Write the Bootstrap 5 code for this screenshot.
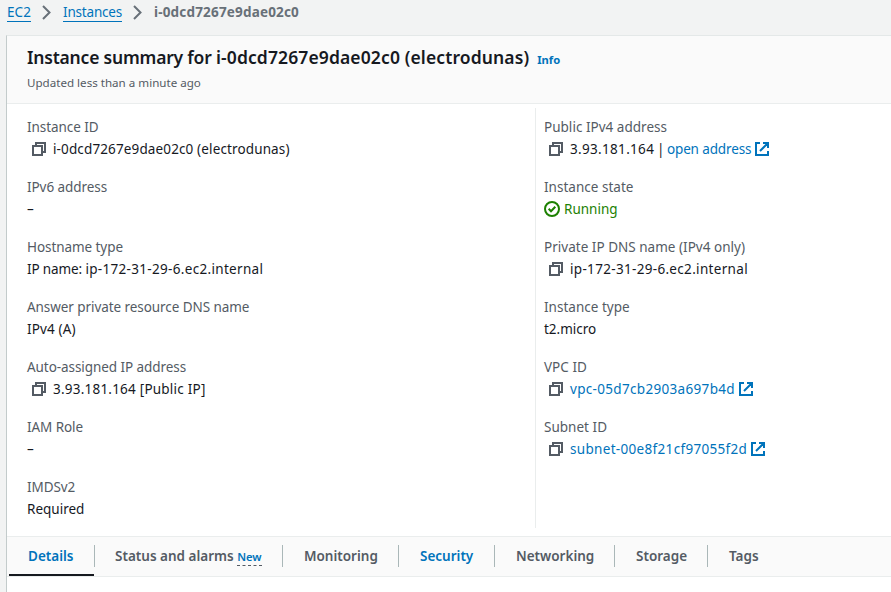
<!DOCTYPE html>
<html lang="en">
<head>
<meta charset="utf-8">
<meta name="viewport" content="width=device-width, initial-scale=1">
<title>Instance summary</title>
<link href="https://cdn.jsdelivr.net/npm/bootstrap@5.3.0/dist/css/bootstrap.min.css" rel="stylesheet">
<style>
body{font-family:"Noto Sans",sans-serif;font-size:13.5px;line-height:22px;color:#16191f;background:#f2f3f3;height:592px;overflow:hidden}
a{color:#0073bb;text-decoration:none}
svg{display:block;flex:none}
.crumbs{height:35px;padding-left:7px}
.crumbs a{border-bottom:1px solid #0073bb;line-height:18px}
.crumbs span{color:#687078;font-weight:700;letter-spacing:.18px;line-height:18px;padding-bottom:1px}
.crumbs .c1{letter-spacing:.1px}
.crumbs .c2{letter-spacing:-.2px}
.crumb-row{height:24px}
.chev{margin:0 12px 0 11px}
.panel{margin-left:6px;height:557px;background:#fff;border-left:1px solid #c3cbcb;border-top:1px solid #e4e8e8}
.panel-head{height:68px;padding:10px 20px 0;background:#fafafa;border-bottom:1px solid #eaeded}
.panel-head h1{font-size:17.5px;line-height:22px;font-weight:600;letter-spacing:.12px}
.panel-head h1 span{letter-spacing:-.2px}
.info{font-size:11.2px;font-weight:700;line-height:22px;margin-left:8px;padding-top:3px}
.updated{font-size:11.6px;line-height:18px;color:#545b64;margin-top:3px}
.details{padding:4px 0 8px}
.left-col{width:528px;padding:8px 20px}
.right-col{padding:8px;border-left:1px solid #eaeded;height:420px}
dl{gap:16px}
dt{font-weight:400;color:#545b64;height:22px}
.left-col dt{letter-spacing:-.07px}
.right-col dt{letter-spacing:.02px}
dd{height:22px;margin:0}
.s1{letter-spacing:.13px}
.s2{letter-spacing:.22px}
.s3{letter-spacing:.32px}
.tight{letter-spacing:-.13px}
.bar{margin:0 -.7px}
.copy{margin:0 7px 0 5px}
.ext{margin-left:4px}
.ok{color:#1d8102}
.tabs{height:41px;padding-left:2px;background:#fafafa;border-top:1px solid #eaeded;border-bottom:1px solid #eaeded;flex-wrap:nowrap}
.tabs .nav-link{position:relative;height:40px;padding:0 0 0 21px;font-weight:600;color:#545b64;line-height:38px;font-size:13.5px;border-radius:0;white-space:nowrap}
.tabs .nav-link:not(.last)::after{content:"";position:absolute;right:0;top:8px;height:22px;width:1px;background:#aab7b8}
.tabs .active{color:#0073bb;padding-left:19px}
.tabs .w2{padding-left:20px}
.tabs .active::before{content:"";position:absolute;left:0;right:1px;bottom:1px;height:2px;background:#16191f}
.tabs .blue{color:#0073bb}
.new{font-size:11.2px;line-height:17px;color:#0073bb;border-bottom:1px dashed #545b64;display:inline-block}
.w1{width:86px}.w2{width:188px}.w3{width:116px}.w4{width:96px}.w5{width:120px}.w6{width:93px}
</style>
<script src="https://cdn.jsdelivr.net/npm/bootstrap@5.3.0/dist/js/bootstrap.bundle.min.js" defer></script>
</head>
<body>
<svg width="0" height="0" class="position-absolute" aria-hidden="true">
<symbol id="copy" viewBox="0 0 14 14"><path d="M1 4h9v9H1zM4 4V1h9v9h-3" fill="none" stroke="#545b64" stroke-width="2"/></symbol>
<symbol id="ext" viewBox="0 0 14 14"><path d="M5 1H1v12h12V9M8 1h5v5M13 1L5 9" fill="none" stroke="#0073bb" stroke-width="2"/></symbol>
<symbol id="chev" viewBox="0 0 9 15"><path d="M1 1l6.5 6.5L1 14" fill="none" stroke="#687078" stroke-width="2"/></symbol>
</svg>
<nav class="crumbs">
<div class="d-flex align-items-center crumb-row">
<a href="#" class="c1">EC2</a><svg width="9" height="15" class="chev"><use href="#chev"/></svg>
<a href="#" class="c2">Instances</a><svg width="9" height="15" class="chev"><use href="#chev"/></svg>
<span>i-0dcd7267e9dae02c0</span>
</div>
</nav>
<main class="panel">
<header class="panel-head">
<div class="d-flex"><h1 class="m-0"><span>Instance summary for </span>i-0dcd7267e9dae02c0 (electrodunas)</h1><a href="#" class="info">Info</a></div>
<div class="updated">Updated less than a minute ago</div>
</header>
<section class="d-flex details">
<dl class="left-col d-flex flex-column m-0">
<div><dt>Instance ID</dt><dd class="d-flex align-items-center s1"><svg width="14" height="14" class="copy"><use href="#copy"/></svg>i-0dcd7267e9dae02c0 (electrodunas)</dd></div>
<div><dt>IPv6 address</dt><dd>–</dd></div>
<div><dt>Hostname type</dt><dd class="s3"><span class="tight">IP name: </span>ip-172-31-29-6.ec2.internal</dd></div>
<div><dt>Answer private resource DNS name</dt><dd class="s1">IPv4 (A)</dd></div>
<div><dt>Auto-assigned IP address</dt><dd class="d-flex align-items-center s2"><svg width="14" height="14" class="copy"><use href="#copy"/></svg>3.93.181.164 [Public IP]</dd></div>
<div><dt>IAM Role</dt><dd>–</dd></div>
<div><dt>IMDSv2</dt><dd>Required</dd></div>
</dl>
<dl class="right-col d-flex flex-column flex-grow-1 m-0">
<div><dt>Public IPv4 address</dt><dd class="d-flex align-items-center"><svg width="14" height="14" class="copy"><use href="#copy"/></svg><span><span class="s3">3.93.181.164</span><span class="tight"> <span class="bar">|</span> <a href="#">open address</a></span></span><svg width="14" height="14" class="ext"><use href="#ext"/></svg></dd></div>
<div><dt>Instance state</dt><dd class="d-flex align-items-center ok"><svg width="16" height="16" class="me-1" viewBox="0 0 16 16" fill="none" stroke="currentColor" stroke-width="2"><circle cx="8" cy="8" r="7"/><path d="M4.7 7.8l2.3 2.4 4.3-4.4"/></svg>Running</dd></div>
<div><dt>Private IP DNS name (IPv4 only)</dt><dd class="d-flex align-items-center s3"><svg width="14" height="14" class="copy"><use href="#copy"/></svg>ip-172-31-29-6.ec2.internal</dd></div>
<div><dt>Instance type</dt><dd>t2.micro</dd></div>
<div><dt>VPC ID</dt><dd class="d-flex align-items-center s3"><svg width="14" height="14" class="copy"><use href="#copy"/></svg><a href="#">vpc-05d7cb2903a697b4d</a><svg width="14" height="14" class="ext"><use href="#ext"/></svg></dd></div>
<div><dt>Subnet ID</dt><dd class="d-flex align-items-center s3"><svg width="14" height="14" class="copy"><use href="#copy"/></svg><a href="#">subnet-00e8f21cf97055f2d</a><svg width="14" height="14" class="ext"><use href="#ext"/></svg></dd></div>
</dl>
</section>
<nav class="nav tabs">
<a class="nav-link active w1" href="#">Details</a>
<a class="nav-link w2" href="#">Status and alarms <span class="new">New</span></a>
<a class="nav-link w3" href="#">Monitoring</a>
<a class="nav-link blue w4" href="#">Security</a>
<a class="nav-link w5" href="#">Networking</a>
<a class="nav-link w6" href="#">Storage</a>
<a class="nav-link last" href="#">Tags</a>
</nav>
</main>
</body>
</html>
